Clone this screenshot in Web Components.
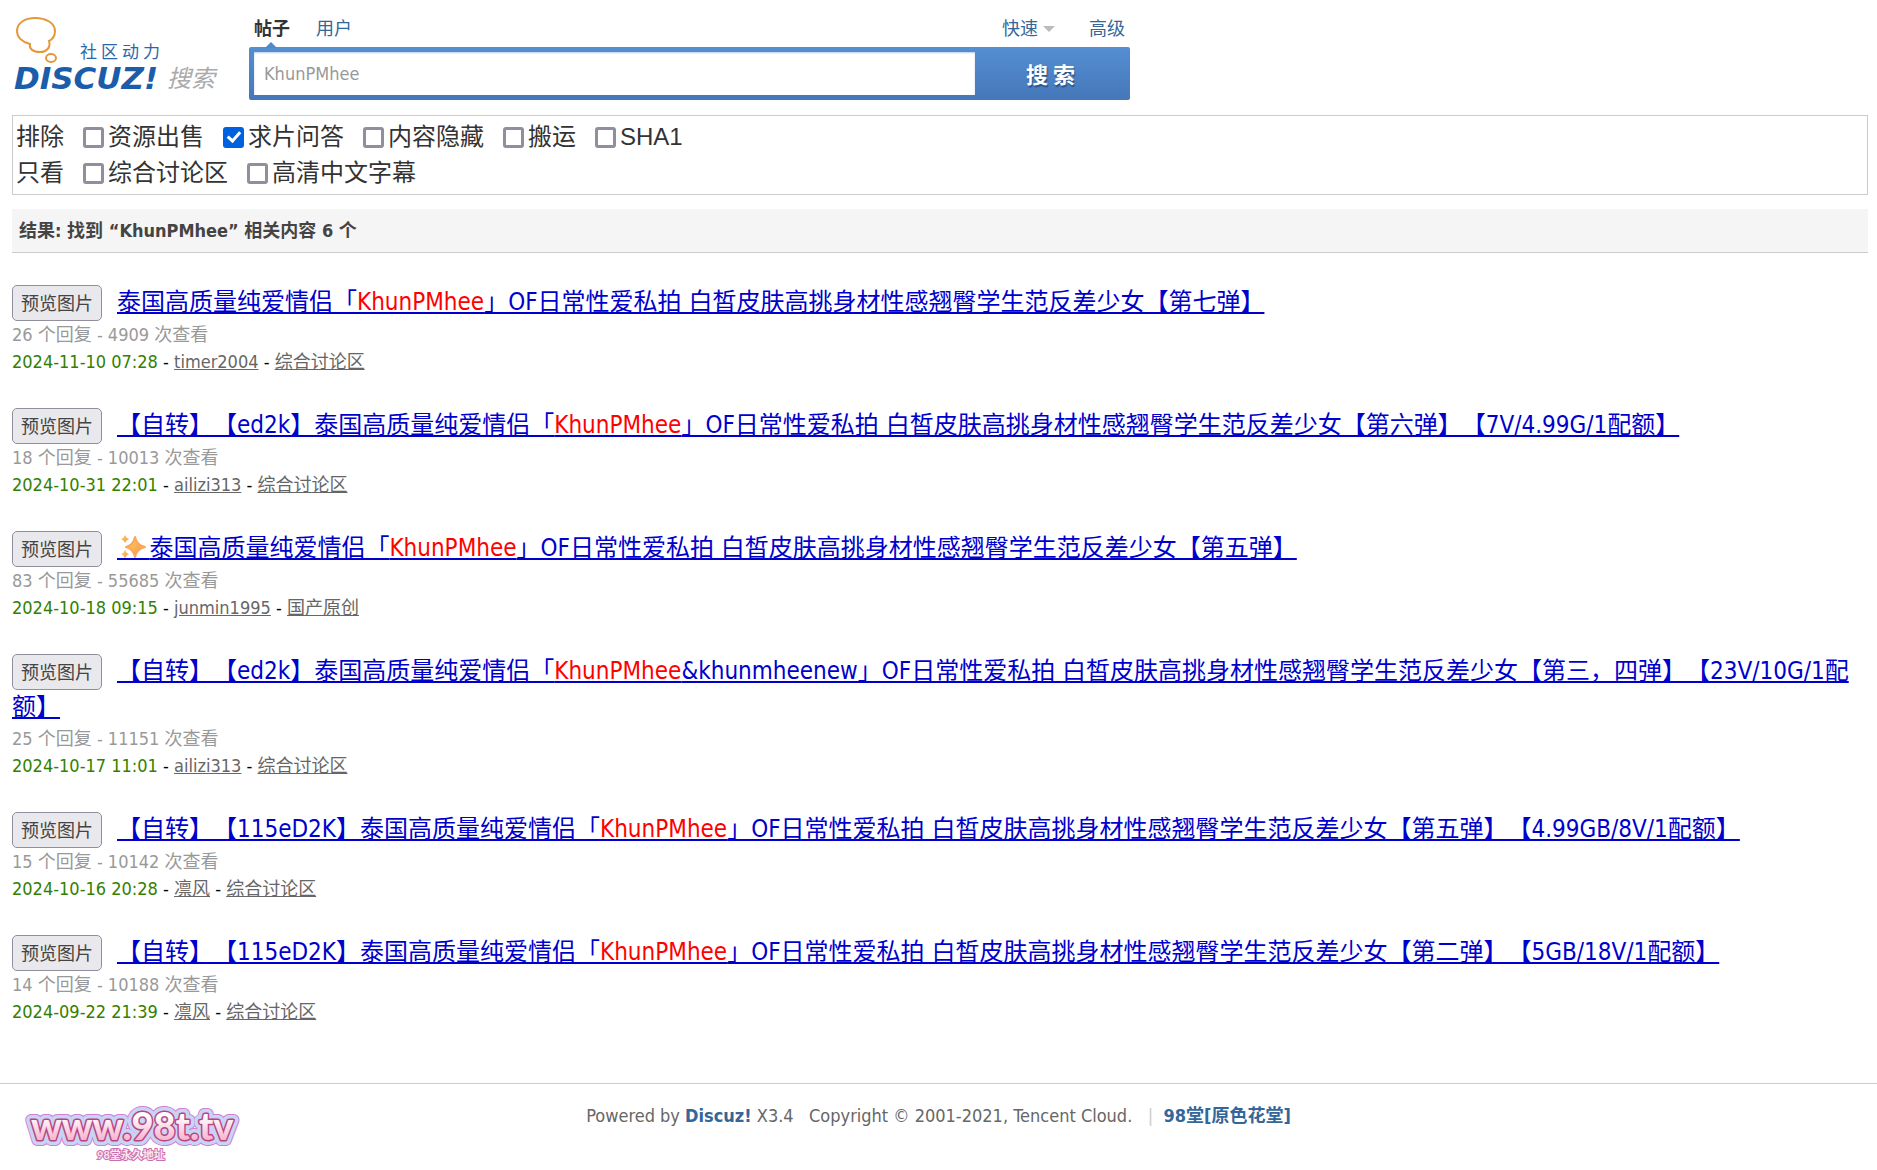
<!DOCTYPE html>
<html lang="zh-CN">
<head>
<meta charset="utf-8">
<title>搜索 - KhunPMhee</title>
<style>
html{background:#fff}
body{margin:0;font:18px/27px "DejaVu Sans Condensed","Noto Sans CJK SC",sans-serif;color:#444;text-spacing-trim:space-all}
</style>
</head>
<body>
<search-page></search-page>
<script>
const define=(name,html,init)=>customElements.define(name,class extends HTMLElement{
  constructor(){super();this.attachShadow({mode:'open'}).innerHTML=html;}
  connectedCallback(){if(init)init.call(this,this.shadowRoot);}
});

define('site-logo',`<style>:host{display:block}svg{display:block}</style>
<svg width="210" height="84" viewBox="0 0 210 84" role="img" aria-label="Discuz!">
<g fill="none" stroke="#e8963c" stroke-width="2">
<path d="M18 29C10 27 5 22 5 16C5 8 13 3 23 3C34 3 43 8 43 16C43 21 41 24 37 26C39 32 35 37 28 37C21 37 17 34 18 29Z"/>
<ellipse cx="39" cy="43" rx="5" ry="4"/></g>
<text x="68" y="43" font-size="17" letter-spacing="4" fill="#2b66ad" font-family="Noto Sans CJK SC">社区动力</text>
<text x="2" y="74" font-size="31" font-weight="700" font-style="italic" fill="#1b5cab" font-family="DejaVu Sans">DISCUZ!</text>
<text x="155" y="72" font-size="24" font-style="italic" fill="#aaa" font-family="Noto Sans CJK SC">搜索</text>
</svg>`);

define('search-bar',`<style>
:host{display:block;width:881px}
nav{display:flex;height:33px;align-items:center;padding:0 5px 2px;gap:26px}
a{color:#369;text-decoration:none}
a.on{color:#333;font-weight:700;position:relative}
a.on::after{content:"";position:absolute;left:11px;bottom:-6px;border:6px solid transparent;border-top:0;border-bottom-color:#4f88cd}
.sp{flex:1}
.quick{display:flex;align-items:center;gap:5px;margin-right:8px}
.quick::after{content:"";border:6px solid transparent;border-bottom:0;border-top-color:#bbb}
form{display:flex;height:53px;box-sizing:border-box;padding:5px 0 5px 5px;background:linear-gradient(#548fd2,#4577b9);border-radius:2px}
input{width:721px;box-sizing:border-box;border:0;padding:0 10px;font:inherit;color:#999;background:#fff;outline:0;box-shadow:inset 0 1px 2px #b9cce6}
button{flex:1;border:0;background:none;color:#fff;font:700 22px/43px "Noto Sans CJK SC",sans-serif;text-shadow:1px 2px 1px #2a548b;padding:0 4px 4px 0}
</style>
<nav><a class="on" href="#">帖子</a><a href="#">用户</a><span class="sp"></span><a class="quick" href="#">快速</a><a href="#">高级</a></nav>
<form><input type="text" aria-label="搜索" value="KhunPMhee"><button type="button">搜 索</button></form>`);

define('filter-check',`<style>
:host{display:block}
label{display:flex;align-items:center;gap:4px}
input{appearance:none;width:21px;height:21px;margin:0;box-sizing:border-box;border:3px solid #8f8f9d;border-radius:3px;background:#fff}
input:checked{border:0;background:#0061e0;display:grid;place-items:center}
input:checked::after{content:"";width:5px;height:10px;border:solid #fff;border-width:0 3px 3px 0;transform:rotate(42deg);margin-bottom:4px}
</style><label><input type="checkbox"><slot></slot></label>`,
function(r){r.querySelector('input').checked=this.hasAttribute('checked')});

define('filter-row',`<style>:host{display:flex;gap:19px;align-items:center;height:36px}</style><slot></slot>`);

define('filter-panel',`<style>:host{display:block;border:1px solid #ccc;padding:3px;color:#333;font:24px/36px "Liberation Sans","Noto Sans CJK SC",sans-serif}</style><slot></slot>`);

define('result-bar',`<style>:host{display:block}h2{margin:0;padding:8px 7px;background:#f5f5f5;border-bottom:1px solid #ccc;font-size:18px;line-height:27px;font-weight:700;color:#444}</style><h2><slot></slot></h2>`);

define('spark-icon',`<style>:host{display:inline;color:#00c}svg{display:inline-block;vertical-align:-3px;border-bottom:0;margin-right:-33px}span{white-space:pre}</style><svg width="33" height="24" viewBox="0 0 33 24" role="img" aria-label="✨"><defs><linearGradient id="g" x2="1" y2="1"><stop stop-color="#ffd95c"/><stop offset="1" stop-color="#f48a4c"/></linearGradient></defs>
<g fill="url(#g)"><path d="M18 2Q19.500 10 28 12Q19.500 14 18 22Q16.500 14 9 12Q16.500 10 18 2Z" stroke="#f9a85a" stroke-width="2" stroke-linejoin="round"/><path d="M8 0Q9 3 12 4Q9 5 8 8Q7 5 4 4Q7 3 8 0Z"/><path d="M8 15Q9 18 12 19Q9 20 8 24Q7 20 4 19Q7 18 8 15Z"/></g></svg><span>&#8195;&#8194;</span>`);

define('thread-item',`<style>
:host{display:block;margin-bottom:29px}
h3{margin:0;padding-top:3px;font-weight:400;font-size:24px;line-height:35px}
button{height:36px;width:90px;padding:0;border:1px solid #8f8f9d;border-radius:5px;background:#e9e9ed;color:#444;font:18px/27px "DejaVu Sans Condensed","Noto Sans CJK SC",sans-serif;vertical-align:middle;margin:1px 15px 0 0}
a.t{color:#00c}
p{margin:0;line-height:27px;color:#999}
.m{color:#000}.m time{color:#338000}.m a{color:#666}
</style>
<h3><button type="button">预览图片</button><a class="t" href="#"><slot></slot></a></h3>
<p class="n"></p><p class="m"><time></time> - <a class="u" href="#"></a> - <a class="f" href="#"></a></p>`,
function(r){
  const d=this.dataset,q=s=>r.querySelector(s);
  q('.n').textContent=d.replies+' 个回复 - '+d.views+' 次查看';
  q('time').textContent=d.date;q('.u').textContent=d.user;q('.f').textContent=d.forum;
});

define('hit-word',`<style>:host{color:red}</style><slot></slot>`);

define('page-footer',`<style>
:host{display:block;border-top:1px solid #ccc;position:relative;min-height:85px;box-sizing:border-box}
p{margin:0;padding:18px 0;text-align:center;color:#666;white-space:pre}
a{color:#369;font-weight:700;text-decoration:none}
i{color:#ccc;font-style:normal}
svg{position:absolute;left:20px;top:18px}
</style>
<p>Powered by <a href="#">Discuz!</a> X3.4   Copyright © 2001-2021, Tencent Cloud.   <i>|</i>  <a href="#">98堂[原色花堂]</a></p>
<svg width="222" height="66" viewBox="0 0 222 66" role="img" aria-label="www.98t.tv">
<defs><linearGradient id="p" x2="0" y2="1"><stop offset=".3" stop-color="#fff"/><stop offset="1" stop-color="#f59ac0"/></linearGradient></defs>
<g font-family="Lato" font-weight="900" font-size="38" stroke-linejoin="round">
<g fill="none" stroke="#cf7fd6" stroke-width="12" aria-hidden="true"><text x="11" y="38">www.98t.tv</text></g>
<g fill="none" stroke="#c9d4f5" stroke-width="10" aria-hidden="true"><text x="11" y="38">www.98t.tv</text></g>
<text x="11" y="38" fill="url(#p)" stroke="#b8457f" stroke-width="3" paint-order="stroke">www.98t.tv</text></g>
<text x="77" y="57" font-family="Lato,Noto Sans CJK SC" font-weight="700" font-size="11" fill="#fbe6f1" stroke="#cc6fae" stroke-width="2" paint-order="stroke">98堂永久地址</text>
</svg>`);

define('search-page',`<style>
:host{display:block}
main{padding:11px 9px 0 12px}
header{display:flex;height:104px;gap:27px}
header site-logo{padding-top:4px}
header search-bar{padding-top:1px}
header search-bar{box-sizing:border-box}
.bar{margin:14px 0 28px}
page-footer{margin-top:58px}
</style>
<main>
<header><site-logo></site-logo><search-bar></search-bar></header>
<filter-panel>
<filter-row><span>排除</span><filter-check>资源出售</filter-check><filter-check checked>求片问答</filter-check><filter-check>内容隐藏</filter-check><filter-check>搬运</filter-check><filter-check>SHA1</filter-check></filter-row>
<filter-row><span>只看</span><filter-check>综合讨论区</filter-check><filter-check>高清中文字幕</filter-check></filter-row>
</filter-panel>
<result-bar class="bar">结果: 找到 “KhunPMhee” 相关内容 6 个</result-bar>
<thread-item data-replies="26" data-views="4909" data-date="2024-11-10 07:28" data-user="timer2004" data-forum="综合讨论区">泰国高质量纯爱情侣「<hit-word>KhunPMhee</hit-word>」OF日常性爱私拍 白皙皮肤高挑身材性感翘臀学生范反差少女【第七弹】</thread-item>
<thread-item data-replies="18" data-views="10013" data-date="2024-10-31 22:01" data-user="ailizi313" data-forum="综合讨论区">【自转】【ed2k】泰国高质量纯爱情侣「<hit-word>KhunPMhee</hit-word>」OF日常性爱私拍 白皙皮肤高挑身材性感翘臀学生范反差少女【第六弹】【7V/4.99G/1配额】</thread-item>
<thread-item data-replies="83" data-views="55685" data-date="2024-10-18 09:15" data-user="junmin1995" data-forum="国产原创"><spark-icon></spark-icon>泰国高质量纯爱情侣「<hit-word>KhunPMhee</hit-word>」OF日常性爱私拍 白皙皮肤高挑身材性感翘臀学生范反差少女【第五弹】</thread-item>
<thread-item data-replies="25" data-views="11151" data-date="2024-10-17 11:01" data-user="ailizi313" data-forum="综合讨论区">【自转】【ed2k】泰国高质量纯爱情侣「<hit-word>KhunPMhee</hit-word>&amp;khunmheenew」OF日常性爱私拍 白皙皮肤高挑身材性感翘臀学生范反差少女【第三，四弹】【23V/10G/1配额】</thread-item>
<thread-item data-replies="15" data-views="10142" data-date="2024-10-16 20:28" data-user="凛风" data-forum="综合讨论区">【自转】【115eD2K】泰国高质量纯爱情侣「<hit-word>KhunPMhee</hit-word>」OF日常性爱私拍 白皙皮肤高挑身材性感翘臀学生范反差少女【第五弹】【4.99GB/8V/1配额】</thread-item>
<thread-item data-replies="14" data-views="10188" data-date="2024-09-22 21:39" data-user="凛风" data-forum="综合讨论区">【自转】【115eD2K】泰国高质量纯爱情侣「<hit-word>KhunPMhee</hit-word>」OF日常性爱私拍 白皙皮肤高挑身材性感翘臀学生范反差少女【第二弹】【5GB/18V/1配额】</thread-item>
</main>
<page-footer></page-footer>`);
</script>
</body>
</html>
